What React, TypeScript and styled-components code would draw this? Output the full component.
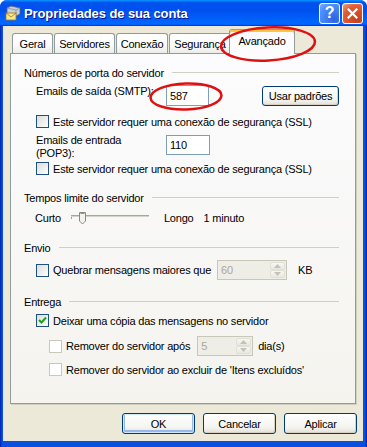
import React from "react";
import styled, { createGlobalStyle, css } from "styled-components";

const GlobalStyle = createGlobalStyle`
  html, body {
    margin: 0;
    padding: 0;
  }
  body {
    width: 367px;
    height: 447px;
    overflow: hidden;
    background: #ffffff;
    font-family: "Liberation Sans", Arial, sans-serif;
    font-size: 11px;
    letter-spacing: -0.2px;
    color: #000;
  }
`;

const Window = styled.div`
  position: relative;
  width: 367px;
  height: 447px;
  display: flex;
  flex-direction: column;
  border-radius: 7px 7px 0 0;
  overflow: hidden;
  background: linear-gradient(90deg, #0020a8 0, #0a4fe0 2px, #0a4fe0 calc(100% - 2px), #0020a8 100%);
`;

const TitleBar = styled.div`
  height: 26px;
  flex-shrink: 0;
  display: flex;
  align-items: center;
  padding: 0 4px 0 5px;
  background: linear-gradient(
    180deg,
    #0997ff,
    #0053ee 10%,
    #0050ee 40%,
    #0066ff 86%,
    #0066ff 92%,
    #005bff 95%,
    #003dd7 97%,
    #003dd7
  );
`;

const Title = styled.span`
  flex: 1;
  margin-left: 3px;
  color: #fff;
  font-family: "Liberation Sans", Arial, sans-serif;
  font-weight: bold;
  font-size: 13px;
  letter-spacing: -0.1px;
  text-shadow: 1px 1px 0 #0f1089;
`;

const CaptionButton = styled.div<{ $kind: "help" | "close" }>`
  width: 21px;
  height: 21px;
  box-sizing: border-box;
  margin-left: 2px;
  border: 1px solid #fff;
  border-radius: 3px;
  display: flex;
  align-items: center;
  justify-content: center;
  color: #fff;
  font-family: "Liberation Sans", Arial, sans-serif;
  font-weight: bold;
  font-size: 16px;
  ${(p) =>
    p.$kind === "help"
      ? css`
          background: radial-gradient(circle at 75% 80%, #2d63e0, #4f8ffa 70%, #7bb0ff);
        `
      : css`
          background: radial-gradient(circle at 75% 80%, #c2401a, #e25d35 65%, #f0a088);
        `}
`;

const Frame = styled.div`
  flex: 1;
  display: flex;
  flex-direction: column;
  margin: 0 4px 6px 3px;
  padding: 2px 7px 0 7px;
  background: #ece9d8;
`;

const TabStrip = styled.div`
  height: 25px;
  display: flex;
  align-items: flex-end;
  padding-left: 2px;
`;

const Tab = styled.div<{ $w: number; $active?: boolean }>`
  box-sizing: border-box;
  width: ${(p) => p.$w}px;
  height: 20px;
  margin-right: 1px;
  display: flex;
  align-items: center;
  justify-content: center;
  border: 1px solid #919b9c;
  border-bottom: none;
  border-radius: 3px 3px 0 0;
  background: linear-gradient(#ffffff, #fcfcfe 55%, #ecebe6);
  white-space: nowrap;
  ${(p) =>
    p.$active &&
    css`
      position: relative;
      z-index: 1;
      height: 25px;
      margin: 0 -2px -1px -3px;
      padding-bottom: 3px;
      border-top: 1px solid #e68b2c;
      box-shadow: inset 0 2px 0 #ffc83c;
      background: #fcfcfe;
    `}
`;

const Panel = styled.div`
  flex: 1;
  box-sizing: border-box;
  display: flex;
  flex-direction: column;
  padding: 12px 16px 0 13px;
  border: 1px solid #919b9c;
  background: linear-gradient(#fcfcfe, #f4f3ee);
  box-shadow: 1px 1px 0 #d0cebf;
`;

const GroupHead = styled.div<{ $mt?: number }>`
  display: flex;
  align-items: center;
  height: 13px;
  margin-top: ${(p) => p.$mt ?? 0}px;
  white-space: nowrap;

  &::after {
    content: "";
    flex: 1;
    height: 1px;
    margin-left: 8px;
    background: #d0d0bf;
  }
`;

const Row = styled.div<{ $mt: number; $indent: number; $top?: boolean }>`
  display: flex;
  align-items: ${(p) => (p.$top ? "flex-start" : "center")};
  margin-top: ${(p) => p.$mt}px;
  margin-left: ${(p) => p.$indent}px;
  white-space: nowrap;
`;

const FieldLabel = styled.span<{ $w: number }>`
  width: ${(p) => p.$w}px;
  line-height: 12.5px;
  flex-shrink: 0;
`;

const TextBox = styled.div<{ $w: number; $h: number; $mt?: number }>`
  box-sizing: border-box;
  width: ${(p) => p.$w}px;
  height: ${(p) => p.$h}px;
  margin-top: ${(p) => p.$mt ?? 0}px;
  padding-left: 3px;
  display: flex;
  align-items: center;
  border: 1px solid #7f9db9;
  background: #fff;
`;

const Box = styled.span<{ $disabled?: boolean }>`
  width: 13px;
  height: 13px;
  box-sizing: border-box;
  flex-shrink: 0;
  margin-right: 4px;
  display: flex;
  align-items: center;
  justify-content: center;
  border: 1px solid ${(p) => (p.$disabled ? "#cac8bb" : "#1c5180")};
  background: ${(p) => (p.$disabled ? "#ffffff" : "linear-gradient(135deg, #dcdcd7, #ffffff)")};
`;

const Spin = styled.div<{ $w: number; $ml: number }>`
  box-sizing: border-box;
  width: ${(p) => p.$w}px;
  height: 20px;
  margin-left: ${(p) => p.$ml}px;
  padding: 1px 1px 1px 3px;
  display: flex;
  align-items: center;
  border: 1px solid #c9c7ba;
  background: #eeede6;
  color: #aca899;
`;

const SpinArrows = styled.div`
  margin-left: auto;
  width: 15px;
  height: 16px;
  display: flex;
  flex-direction: column;
`;

const SpinHalf = styled.div`
  flex: 1;
  display: flex;
  align-items: center;
  justify-content: center;
  border-radius: 2px;
  background: linear-gradient(#f7f7f3, #e9e8e0);
  border: 1px solid #e2e0d6;
`;

const After = styled.span<{ $ml: number }>`
  margin-left: ${(p) => p.$ml}px;
  display: flex;
  align-items: center;
`;

const Button = styled.div<{ $w: number; $h?: number; $mt?: number; $ml?: number; $default?: boolean }>`
  box-sizing: border-box;
  width: ${(p) => p.$w}px;
  height: ${(p) => p.$h ?? 21}px;
  margin-top: ${(p) => p.$mt ?? 0}px;
  margin-left: ${(p) => p.$ml ?? 0}px;
  display: flex;
  align-items: center;
  justify-content: center;
  border: 1px solid #003c74;
  border-radius: 3px;
  background: linear-gradient(#ffffff, #f4f4f0 70%, #e3e0d6);
  box-shadow: ${(p) =>
    p.$default
      ? "inset 0 0 0 1px #cee7ff, inset 0 -1px 0 2px #98b8ea"
      : "inset -1px -1px 0 #d6d0c5"};
`;

const ButtonRow = styled.div`
  display: flex;
  justify-content: flex-end;
  gap: 8px;
  margin: 9px -1px 7px 0;
`;

const SliderRow = styled(Row)`
  height: 14px;
`;

const Annotations = styled.svg`
  position: absolute;
  inset: 0;
  pointer-events: none;
  z-index: 5;
`;

const MailIcon = () => (
  <svg width="16" height="16" viewBox="0 0 16 16">
    <path d="M2 3 L6 1 L15 3 L15 9 L11 11 L2 9 Z" fill="#c9cdd6" stroke="#5e6470" strokeWidth="0.8" />
    <path d="M2 3 L11 5 L15 3" fill="none" stroke="#8a909c" strokeWidth="0.8" />
    <path d="M11 5 L11 11" stroke="#8a909c" strokeWidth="0.8" />
    <rect x="1" y="8" width="10" height="7" fill="#fbe58a" stroke="#9a7a1c" strokeWidth="0.8" />
    <path d="M1 8 L6 12 L11 8" fill="none" stroke="#9a7a1c" strokeWidth="0.8" />
  </svg>
);

const CloseX = () => (
  <svg width="11" height="11" viewBox="0 0 11 11">
    <path d="M1.5 1.5 L9.5 9.5 M9.5 1.5 L1.5 9.5" stroke="#fff" strokeWidth="2.2" strokeLinecap="square" />
  </svg>
);

const Check = () => (
  <svg width="9" height="9" viewBox="0 0 9 9">
    <path d="M1 4 L3.5 6.5 L8 1.5" fill="none" stroke="#21a121" strokeWidth="2" />
  </svg>
);

const Arrow = ({ up }: { up?: boolean }) => (
  <svg width="7" height="4" viewBox="0 0 7 4">
    <path d={up ? "M0 4 L3.5 0 L7 4 Z" : "M0 0 L3.5 4 L7 0 Z"} fill="#c3c2b8" />
  </svg>
);

const Slider = () => (
  <svg width="78" height="14" viewBox="0 0 78 14">
    <path d="M0.5 8 L0.5 4.5 L3 4.5" fill="none" stroke="#9d9d97" />
    <rect x="0" y="4" width="78" height="2" fill="#d6d4c8" />
    <rect x="0" y="4" width="78" height="1" fill="#a8a79c" />
    <path d="M8.5 1.5 L14.5 1.5 L14.5 10 L11.5 13 L8.5 10 Z" fill="#f4f4ee" stroke="#8a8a80" />
    <path d="M9.5 2.5 L13.5 2.5" stroke="#5ab85a" />
  </svg>
);

const Spinner = ({ value, w, ml }: { value: string; w: number; ml: number }) => (
  <Spin $w={w} $ml={ml}>
    {value}
    <SpinArrows>
      <SpinHalf>
        <Arrow up />
      </SpinHalf>
      <SpinHalf>
        <Arrow />
      </SpinHalf>
    </SpinArrows>
  </Spin>
);

export default function App() {
  return (
    <>
      <GlobalStyle />
      <Window>
        <TitleBar>
          <MailIcon />
          <Title>Propriedades de sua conta</Title>
          <CaptionButton $kind="help">?</CaptionButton>
          <CaptionButton $kind="close">
            <CloseX />
          </CaptionButton>
        </TitleBar>

        <Frame>
          <TabStrip>
            <Tab $w={41}>Geral</Tab>
            <Tab $w={61}>Servidores</Tab>
            <Tab $w={52}>Conexão</Tab>
            <Tab $w={62}>Segurança</Tab>
            <Tab $w={66} $active>
              Avançado
            </Tab>
          </TabStrip>

          <Panel>
            <GroupHead>Números de porta do servidor</GroupHead>
            <Row $mt={6} $indent={12} $top>
              <FieldLabel $w={130}>Emails de saída (SMTP):</FieldLabel>
              <TextBox $w={44} $h={21}>587</TextBox>
              <Button $w={79} $h={20} $mt={1} $ml={53}>
                Usar padrões
              </Button>
            </Row>
            <Row $mt={9} $indent={12}>
              <Box />
              Este servidor requer uma conexão de segurança (SSL)
            </Row>
            <Row $mt={6} $indent={12} $top>
              <FieldLabel $w={130}>
                Emails de entrada
                <br />
                (POP3):
              </FieldLabel>
              <TextBox $w={44} $h={20} $mt={1}>
                110
              </TextBox>
            </Row>
            <Row $mt={3} $indent={12}>
              <Box />
              Este servidor requer uma conexão de segurança (SSL)
            </Row>

            <GroupHead $mt={16}>Tempos limite do servidor</GroupHead>
            <SliderRow $mt={7} $indent={11}>
              Curto
              <After $ml={10}>
                <Slider />
              </After>
              <After $ml={15}>Longo</After>
              <After $ml={10}>1 minuto</After>
            </SliderRow>

            <GroupHead $mt={16}>Envio</GroupHead>
            <Row $mt={6} $indent={12}>
              <Box />
              Quebrar mensagens maiores que
              <Spinner value="60" w={70} ml={6} />
              <After $ml={11}>KB</After>
            </Row>

            <GroupHead $mt={15}>Entrega</GroupHead>
            <Row $mt={6} $indent={12}>
              <Box>
                <Check />
              </Box>
              Deixar uma cópia das mensagens no servidor
            </Row>
            <Row $mt={9} $indent={25}>
              <Box $disabled />
              Remover do servidor após
              <Spinner value="5" w={56} ml={7} />
              <After $ml={5}>dia(s)</After>
            </Row>
            <Row $mt={7} $indent={25}>
              <Box $disabled />
              Remover do servidor ao excluir de 'Itens excluídos'
            </Row>
          </Panel>

          <ButtonRow>
            <Button $w={73} $default>
              OK
            </Button>
            <Button $w={73}>Cancelar</Button>
            <Button $w={73}>Aplicar</Button>
          </ButtonRow>
        </Frame>

        <Annotations width="367" height="447" viewBox="0 0 367 447">
          <ellipse cx="268" cy="44" rx="47" ry="16.5" fill="none" stroke="#e01010" strokeWidth="2.5" transform="rotate(-3 268 44)" />
          <ellipse cx="186" cy="96.5" rx="35.5" ry="13" fill="none" stroke="#e01010" strokeWidth="2.5" transform="rotate(-2 186 96.5)" />
        </Annotations>
      </Window>
    </>
  );
}
